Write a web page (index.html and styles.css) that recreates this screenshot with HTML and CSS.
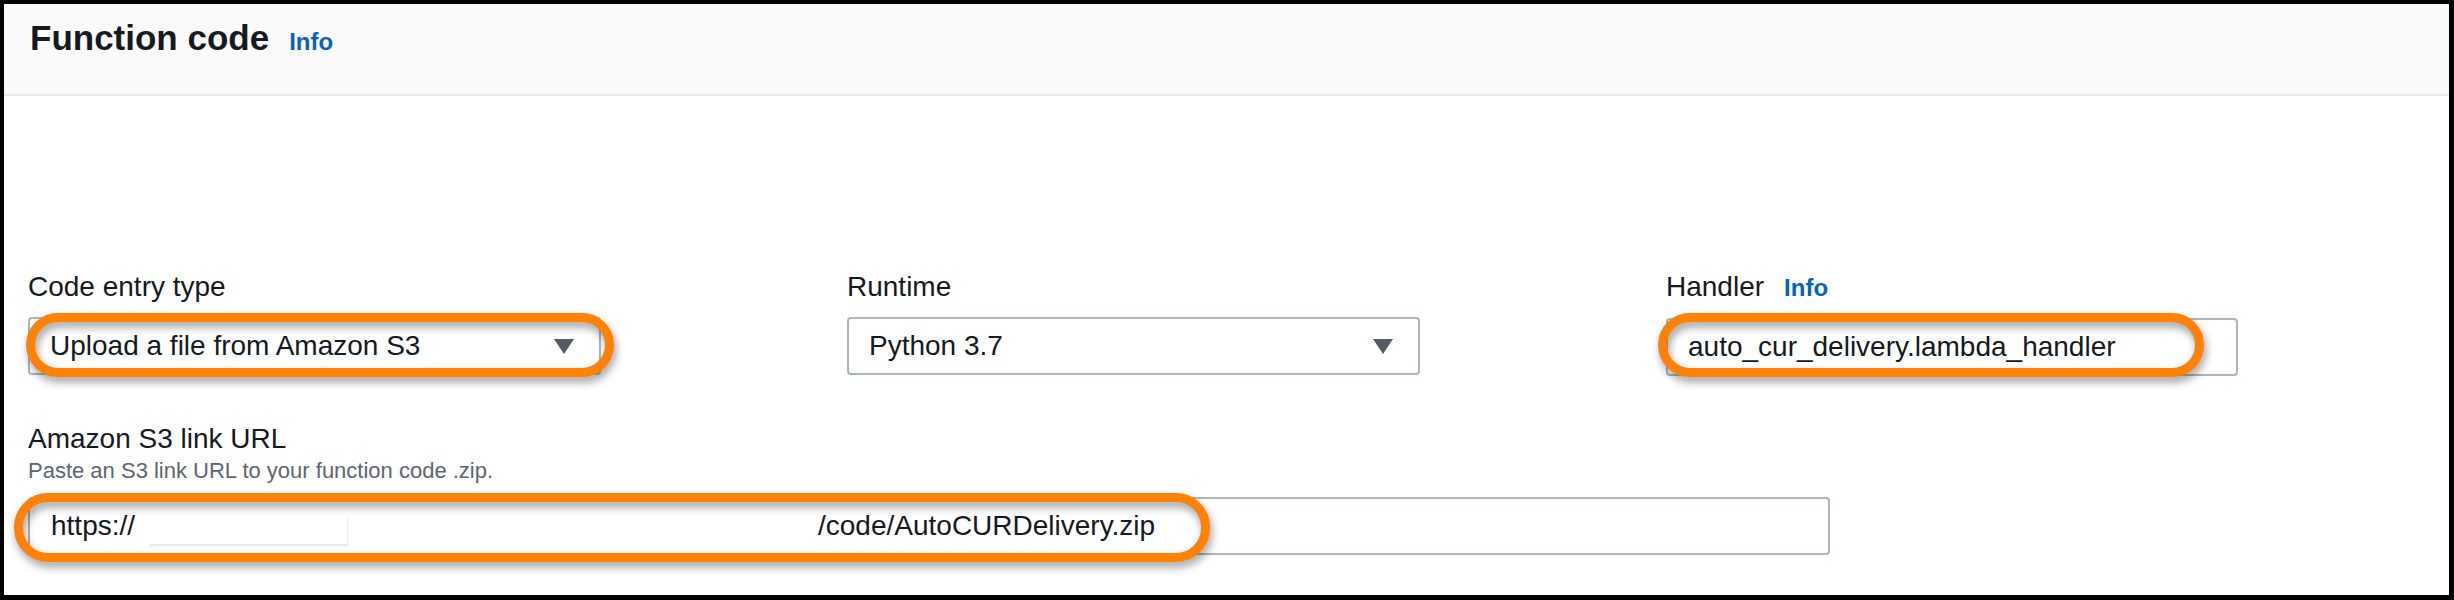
FILE: index.html
```html
<!DOCTYPE html>
<html lang="en">
<head>
<meta charset="utf-8">
<title>Function code</title>
<link rel="stylesheet" href="styles.css">
</head>
<body>
<div class="frame">
  <section class="card">
    <header class="header">
      <h2 class="title">Function code</h2>
      <a class="info info-title">Info</a>
    </header>
    <div class="body">
      <div class="row3">
        <div class="field">
          <div class="label">Code entry type</div>
          <div class="control select">
            <span class="value">Upload a file from Amazon S3</span>
            <svg class="caret" width="20" height="15" viewBox="0 0 20 15"><polygon points="0,0 20,0 10,15" fill="#545b64"/></svg>
          </div>
        </div>
        <div class="field">
          <div class="label">Runtime</div>
          <div class="control select">
            <span class="value">Python 3.7</span>
            <svg class="caret" width="20" height="15" viewBox="0 0 20 15"><polygon points="0,0 20,0 10,15" fill="#545b64"/></svg>
          </div>
        </div>
        <div class="field">
          <div class="label">Handler <a class="info">Info</a></div>
          <div class="control">
            <span class="value">auto_cur_delivery.lambda_handler</span>
          </div>
        </div>
      </div>
      <div class="field url-field">
        <div class="label">Amazon S3 link URL</div>
        <div class="desc">Paste an S3 link URL to your function code .zip.</div>
        <div class="control url">
          <span class="prefix"><span class="value scheme">https://</span><span class="redact"></span></span><span class="value">/code/AutoCURDelivery.zip</span>
        </div>
      </div>
    </div>
    <div class="mark mark-entry"></div>
    <div class="mark mark-handler"></div>
    <div class="mark mark-url"></div>
  </section>
</div>
</body>
</html>
```
FILE: styles.css
```css
html, body {
  margin: 0;
  padding: 0;
  background: #000;
}
body {
  font-family: "Liberation Sans", Arial, sans-serif;
  color: #16191f;
}
.frame {
  padding: 4px 5px 5px 4px;
  width: 2454px;
  height: 600px;
  box-sizing: border-box;
}
.card {
  position: relative;
  background: #fff;
  height: 591px;
  overflow: hidden;
}
.header {
  box-sizing: border-box;
  height: 92px;
  padding: 14px 26px 0;
  background: #fafafa;
  border-bottom: 2px solid #e6eaea;
  display: flex;
  align-items: baseline;
}
.title {
  margin: 0;
  font-size: 35px;
  line-height: 40px;
  font-weight: 700;
  color: #16191f;
}
.info {
  font-size: 24px;
  font-weight: 700;
  color: #0b63b5;
  text-decoration: none;
}
.info-title {
  margin-left: 20px;
}
.body {
  padding: 173px 0 0 24px;
}
.row3 {
  display: grid;
  grid-template-columns: 573px 573px 572px;
  column-gap: 246px;
}
.label {
  font-size: 28px;
  line-height: 36px;
  margin-bottom: 12px;
  display: flex;
  align-items: baseline;
  gap: 20px;
}
.control {
  box-sizing: border-box;
  height: 58px;
  border: 2px solid #aab7b8;
  border-radius: 4px;
  padding: 0 25px 0 20px;
  display: flex;
  align-items: center;
  font-size: 28px;
  line-height: 54px;
  white-space: nowrap;
}
.select {
  justify-content: space-between;
}
.caret {
  display: block;
}
.url-field {
  margin-top: 45px;
}
.url-field .label {
  margin-bottom: 0;
}
.desc {
  font-size: 22px;
  line-height: 28px;
  color: #5f6670;
  margin-bottom: 12px;
}
.url {
  width: 1802px;
  padding-left: 21px;
}
.prefix {
  display: flex;
  align-items: center;
  width: 767px;
}
.scheme {
  display: block;
  width: 97px;
}
.redact {
  display: block;
  width: 199px;
  height: 28px;
  background: #fff;
  box-shadow: 1px 2px 2px rgba(0, 0, 0, 0.10);
  margin-top: 8px;
}
.mark {
  position: absolute;
  box-sizing: border-box;
  border: 9px solid #ff8207;
  border-radius: 32px;
  filter: drop-shadow(2px 5px 4px rgba(0, 0, 0, 0.38));
}
.mark-entry {
  left: 22px;
  top: 309px;
  width: 588px;
  height: 64px;
}
.mark-handler {
  left: 1654px;
  top: 309px;
  width: 546px;
  height: 64px;
}
.mark-url {
  left: 10px;
  top: 489px;
  width: 1196px;
  height: 69px;
  border-radius: 34px;
}
```
